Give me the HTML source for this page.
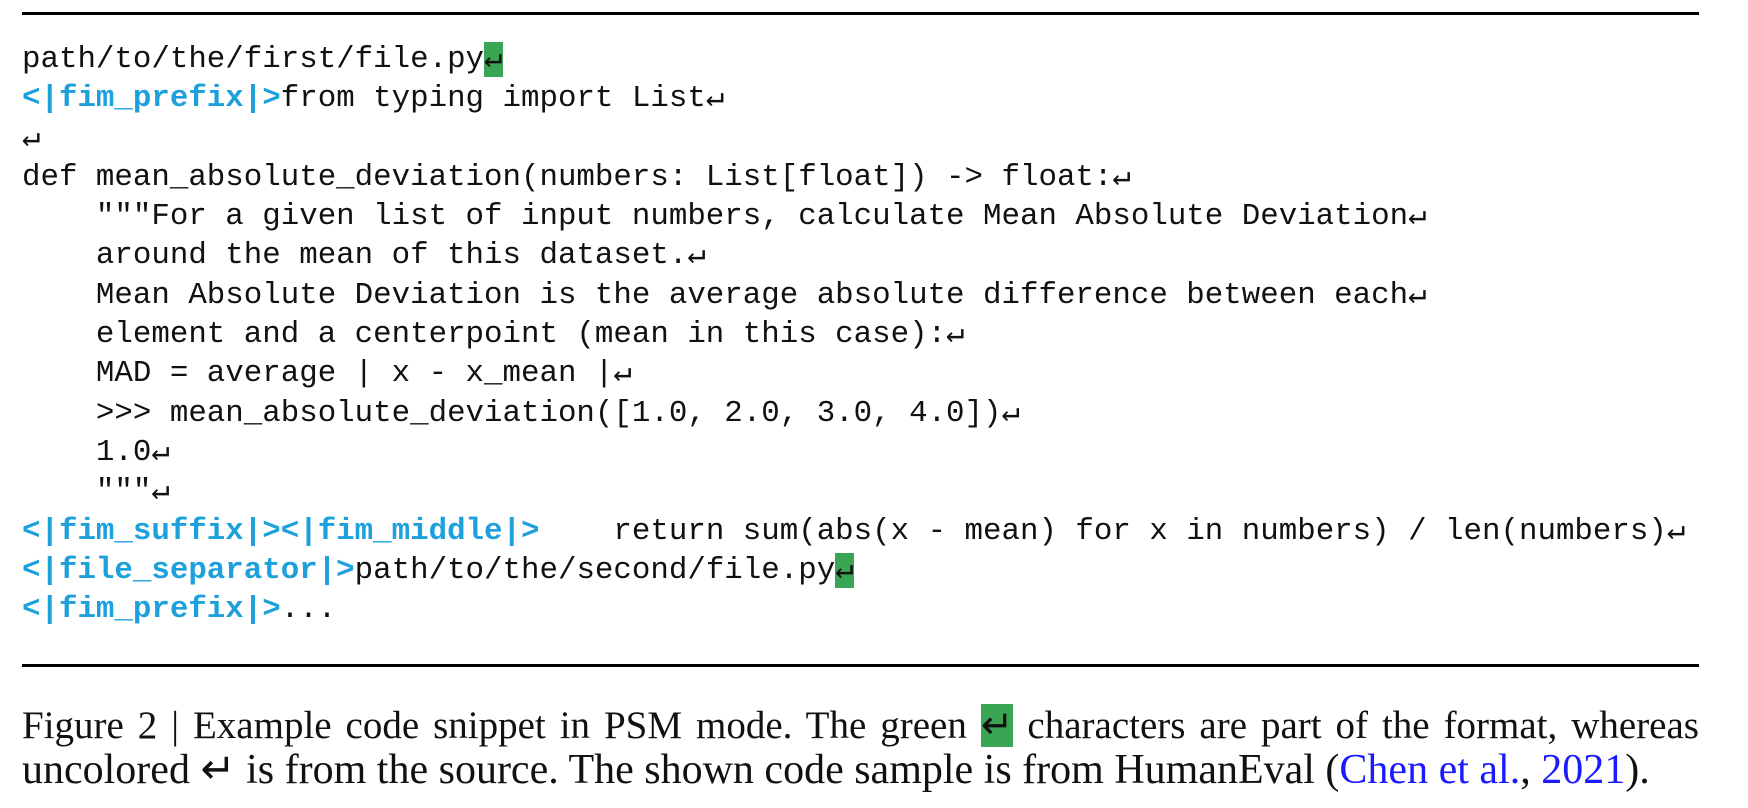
<!DOCTYPE html>
<html><head><meta charset="utf-8"><style>
html,body{margin:0;padding:0;background:#fff;width:1748px;height:808px;overflow:hidden}
.rule{position:absolute;left:22px;width:1677px;height:3px;background:#000}
pre{position:absolute;left:22px;top:40px;margin:0;font-family:"Liberation Mono",monospace;font-size:30.8px;line-height:39.3px;color:#111}
.b{color:#1ea0dc;font-weight:bold}
.g{background:#3aa655}
.cap{position:absolute;left:22px;width:1677px;font-family:"Liberation Serif",serif;font-size:41px;line-height:44px;color:#111;white-space:nowrap}
.cap a{color:#1a1aff;text-decoration:none}
</style></head><body>
<div class="rule" style="top:12px"></div>
<pre>path/to/the/first/file.py<span class="g">↵</span>
<span class="b">&lt;|fim_prefix|&gt;</span>from typing import List↵
↵
def mean_absolute_deviation(numbers: List[float]) -&gt; float:↵
    """For a given list of input numbers, calculate Mean Absolute Deviation↵
    around the mean of this dataset.↵
    Mean Absolute Deviation is the average absolute difference between each↵
    element and a centerpoint (mean in this case):↵
    MAD = average | x - x_mean |↵
    &gt;&gt;&gt; mean_absolute_deviation([1.0, 2.0, 3.0, 4.0])↵
    1.0↵
    """↵
<span class="b">&lt;|fim_suffix|&gt;&lt;|fim_middle|&gt;</span>    return sum(abs(x - mean) for x in numbers) / len(numbers)↵
<span class="b">&lt;|file_separator|&gt;</span>path/to/the/second/file.py<span class="g">↵</span>
<span class="b">&lt;|fim_prefix|&gt;</span>...</pre>
<div class="rule" style="top:664px"></div>
<div class="cap" style="top:704px;font-size:39px;text-align:justify;text-align-last:justify;white-space:normal">Figure 2 | Example code snippet in PSM mode. The green <span class="g">↵</span> characters are part of the format, whereas</div>
<div class="cap" style="top:748px;font-size:42px">uncolored ↵ is from the source. The shown code sample is from HumanEval (<a>Chen et al.</a>, <a>2021</a>).</div>
</body></html>
